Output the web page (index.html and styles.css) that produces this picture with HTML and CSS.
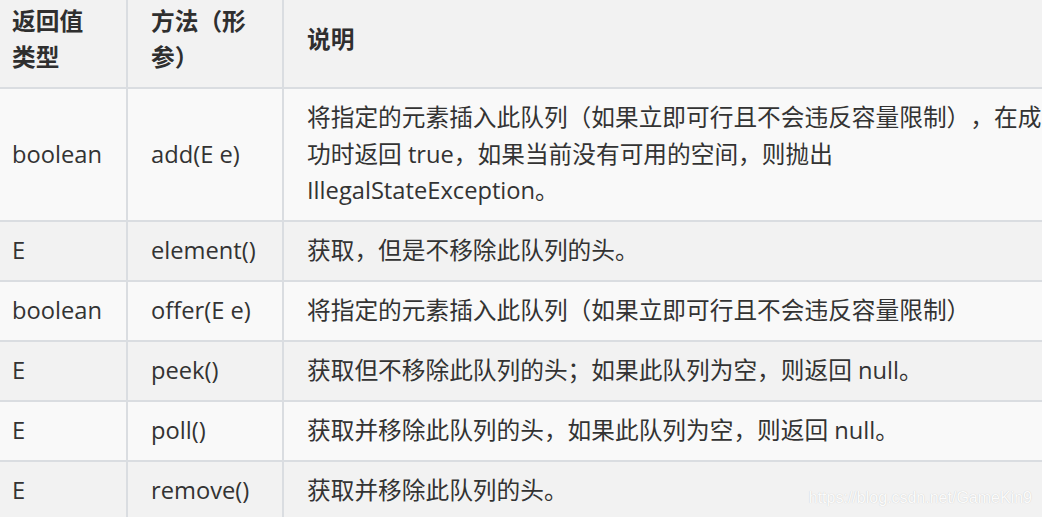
FILE: index.html
```html
<!DOCTYPE html>
<html lang="zh-CN">
<head>
<meta charset="utf-8">
<title>Queue 方法</title>
<link rel="stylesheet" href="styles.css">
</head>
<body>
<div class="page">
  <table class="api">
    <colgroup>
      <col class="c-type">
      <col class="c-method">
      <col class="c-desc">
    </colgroup>
    <thead>
      <tr>
        <th>返回值类型</th>
        <th>方法（形参）</th>
        <th>说明</th>
      </tr>
    </thead>
    <tbody>
      <tr>
        <td>boolean</td>
        <td>add(E e)</td>
        <td>将指定的元素插入此队列（如果立即可行且不会违反容量限制），在成功时返回 true，如果当前没有可用的空间，则抛出 IllegalStateException。</td>
      </tr>
      <tr>
        <td>E</td>
        <td>element()</td>
        <td>获取，但是不移除此队列的头。</td>
      </tr>
      <tr>
        <td>boolean</td>
        <td>offer(E e)</td>
        <td>将指定的元素插入此队列（如果立即可行且不会违反容量限制）</td>
      </tr>
      <tr>
        <td>E</td>
        <td>peek()</td>
        <td>获取但不移除此队列的头；如果此队列为空，则返回 null。</td>
      </tr>
      <tr>
        <td>E</td>
        <td>poll()</td>
        <td>获取并移除此队列的头，如果此队列为空，则返回 null。</td>
      </tr>
      <tr>
        <td>E</td>
        <td>remove()</td>
        <td>获取并移除此队列的头。</td>
      </tr>
    </tbody>
  </table>
  <div class="watermark">https://blog.csdn.net/GameKin9</div>
</div>
</body>
</html>
```

FILE: styles.css
```css
html, body {
  margin: 0;
  padding: 0;
  overflow: hidden;
  background: #f2f2f2;
}

.page {
  position: relative;
  width: 1042px;
  height: 517px;
  overflow: hidden;
}

.api {
  border-collapse: collapse;
  table-layout: fixed;
  width: 1080px;
  margin: -10px 0 0 -13px;
  font-family: "Open Sans", "Noto Sans CJK SC", sans-serif;
  font-size: 23.7px;
  line-height: 36.5px;
  color: #333;
  text-spacing-trim: space-all;
}

.c-type { width: 139px; }
.c-method { width: 156px; }
.c-desc { width: 785px; }

.api th,
.api td {
  border: 2px solid #dadde1;
  padding: 10.75px 23px;
  text-align: left;
  vertical-align: middle;
}

.api th {
  font-weight: bold;
  background: #f2f2f2;
  color: #2f2f2f;
}

.api tbody tr:nth-child(odd) td {
  background: #f9f9f9;
}

.api tbody tr:nth-child(even) td {
  background: #f2f2f2;
}

.watermark {
  position: absolute;
  right: 10px;
  bottom: 10px;
  font-family: "Liberation Sans", Arial, sans-serif;
  font-size: 16px;
  color: rgba(255, 255, 255, 0.95);
  text-shadow: 0 0 1px rgba(0, 0, 0, 0.2);
}
```
